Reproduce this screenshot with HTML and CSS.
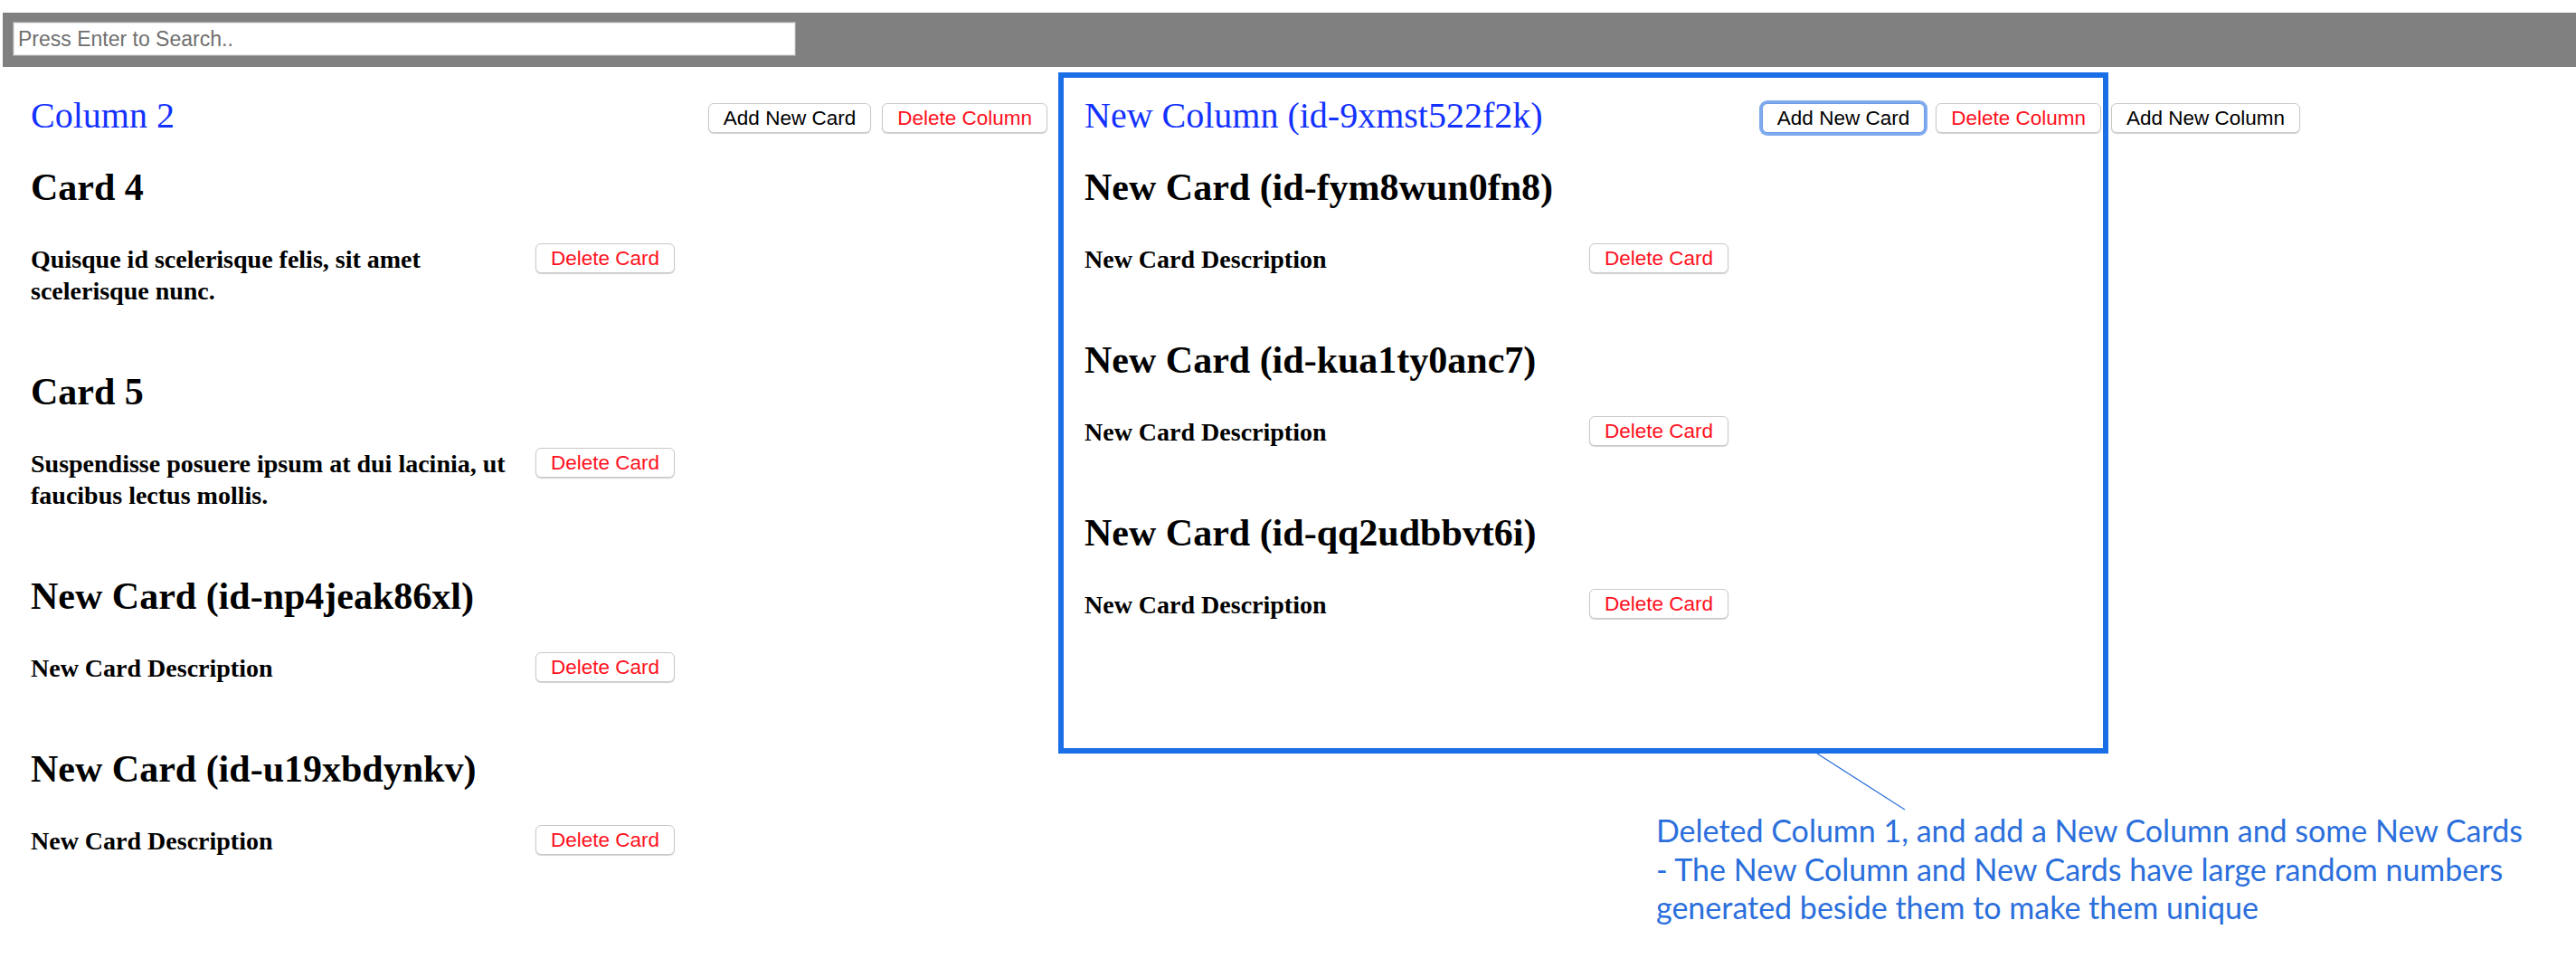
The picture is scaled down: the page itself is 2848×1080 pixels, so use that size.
FILE: index.html
```html
<!DOCTYPE html>
<html lang="en">
<head>
<meta charset="utf-8">
<title>Kanban Board</title>
<link rel="stylesheet" href="styles.css">
</head>
<body>
<div class="page">
  <div class="topbar">
    <input class="search" type="text" placeholder="Press Enter to Search..">
  </div>

  <div class="board">
    <section class="column">
      <div class="col-header">
        <h2 class="col-title">Column 2</h2>
        <div class="col-actions">
          <button class="btn">Add New Card</button>
          <button class="btn btn-danger">Delete Column</button>
        </div>
      </div>
      <article class="card">
        <h3 class="card-title">Card 4</h3>
        <div class="card-body">
          <p class="card-desc">Quisque id scelerisque felis, sit amet scelerisque nunc.</p>
          <button class="btn btn-danger">Delete Card</button>
        </div>
      </article>
      <article class="card">
        <h3 class="card-title">Card 5</h3>
        <div class="card-body">
          <p class="card-desc">Suspendisse posuere ipsum at dui lacinia, ut faucibus lectus mollis.</p>
          <button class="btn btn-danger">Delete Card</button>
        </div>
      </article>
      <article class="card">
        <h3 class="card-title">New Card (id-np4jeak86xl)</h3>
        <div class="card-body">
          <p class="card-desc">New Card Description</p>
          <button class="btn btn-danger">Delete Card</button>
        </div>
      </article>
      <article class="card">
        <h3 class="card-title">New Card (id-u19xbdynkv)</h3>
        <div class="card-body">
          <p class="card-desc">New Card Description</p>
          <button class="btn btn-danger">Delete Card</button>
        </div>
      </article>
    </section>

    <section class="column">
      <div class="col-header">
        <h2 class="col-title">New Column (id-9xmst522f2k)</h2>
        <div class="col-actions">
          <button class="btn btn-focus">Add New Card</button>
          <button class="btn btn-danger">Delete Column</button>
        </div>
      </div>
      <article class="card">
        <h3 class="card-title">New Card (id-fym8wun0fn8)</h3>
        <div class="card-body">
          <p class="card-desc">New Card Description</p>
          <button class="btn btn-danger">Delete Card</button>
        </div>
      </article>
      <article class="card">
        <h3 class="card-title">New Card (id-kua1ty0anc7)</h3>
        <div class="card-body">
          <p class="card-desc">New Card Description</p>
          <button class="btn btn-danger">Delete Card</button>
        </div>
      </article>
      <article class="card">
        <h3 class="card-title">New Card (id-qq2udbbvt6i)</h3>
        <div class="card-body">
          <p class="card-desc">New Card Description</p>
          <button class="btn btn-danger">Delete Card</button>
        </div>
      </article>
    </section>

    <button class="btn btn-add-column">Add New Column</button>
  </div>

  <div class="highlight-box"></div>
  <svg class="callout-line" width="110" height="70" viewBox="0 0 110 70">
    <line x1="4" y1="3" x2="101" y2="65" stroke="#2b6fdc" stroke-width="1.2"/>
  </svg>
  <p class="callout-text">Deleted Column 1, and add a New Column and some New Cards<br>- The New Column and New Cards have large random numbers<br>generated beside them to make them unique</p>
</div>
</body>
</html>
```

FILE: styles.css
```css
html, body {
  margin: 0;
  padding: 0;
  background: #ffffff;
}

.page {
  position: relative;
  width: 2848px;
  min-height: 1080px;
  padding-top: 14px;
  box-sizing: border-box;
  font-family: "Liberation Serif", "Times New Roman", serif;
  color: #000;
}

.topbar {
  margin-left: 3px;
  height: 60px;
  background: #808080;
  padding: 10px 0 0 11px;
  box-sizing: border-box;
}

.search {
  display: block;
  width: 866px;
  height: 38px;
  box-sizing: border-box;
  border: 1px solid #a3a3a3;
  box-shadow: inset 0 0 0 1px #e6e6e6;
  background: #fff;
  padding: 0 0 0 5px;
  margin: 0;
  font-family: "Liberation Sans", Arial, sans-serif;
  font-size: 23px;
  color: #333;
  outline: none;
}

.search::placeholder {
  color: #6f6f6f;
}

.board {
  display: flex;
  align-items: flex-start;
  padding-left: 34px;
  margin-top: 31px;
}

.column {
  width: 1124px;
  flex: none;
}

.column + .column {
  margin-left: 41px;
}

.col-header {
  display: flex;
  align-items: flex-start;
  justify-content: space-between;
  margin-bottom: 33px;
}

.col-title {
  margin: 0;
  font-size: 40px;
  line-height: 46px;
  font-weight: normal;
  color: #1432ff;
}

.col-actions {
  display: flex;
  gap: 12px;
  margin-top: 9px;
}

.btn {
  height: 33px;
  padding: 0 16px;
  box-sizing: border-box;
  background: #ffffff;
  border: 1px solid #c9c9c9;
  border-radius: 6px;
  box-shadow: 0 1px 1px rgba(0, 0, 0, 0.18);
  font-family: "Liberation Sans", Arial, sans-serif;
  font-size: 22.5px;
  line-height: 31px;
  color: #000;
  white-space: nowrap;
  flex: none;
}

.btn-danger {
  color: #ff1020;
}

.btn-focus {
  border-color: #6c9be6;
  box-shadow: 0 0 0 3px #80aaee;
}

.btn-add-column {
  margin-left: 11px;
  margin-top: 9px;
}

.card {
  margin-bottom: 71px;
}

.card-title {
  margin: 0 0 38px 0;
  font-size: 42px;
  line-height: 47px;
  font-weight: bold;
}

.card-body {
  display: flex;
  align-items: flex-start;
}

.card-desc {
  width: 545px;
  margin: 0 13px 0 0;
  font-size: 28px;
  line-height: 35px;
  font-weight: bold;
  flex: none;
}

/* annotation overlay */
.highlight-box {
  position: absolute;
  left: 1170px;
  top: 80px;
  width: 1161px;
  height: 753px;
  box-sizing: border-box;
  border: 6px solid #1a6fe6;
  pointer-events: none;
}

.callout-line {
  position: absolute;
  left: 2005px;
  top: 830px;
}

.callout-text {
  position: absolute;
  left: 1831px;
  top: 897px;
  margin: 0;
  font-family: Lato, "Open Sans", sans-serif;
  font-size: 34px;
  line-height: 42.5px;
  color: #2b6fdc;
  white-space: nowrap;
}
```
